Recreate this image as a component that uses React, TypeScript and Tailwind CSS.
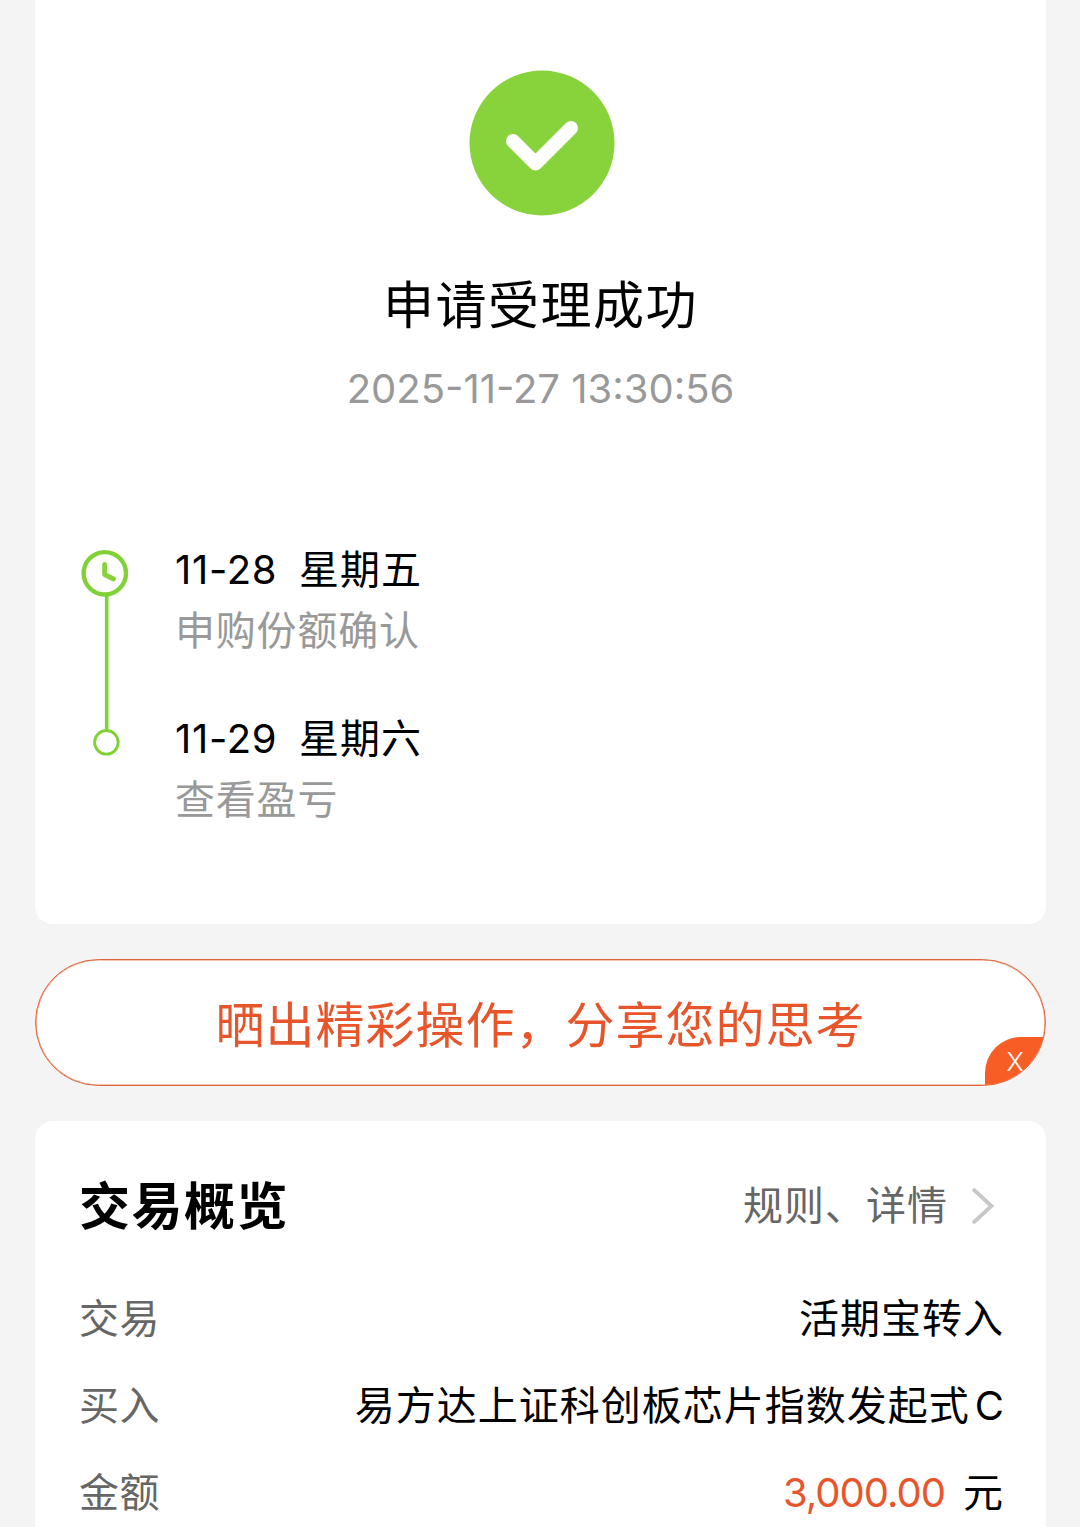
import type { ReactNode } from 'react';

const LATIN = "font-['Inter','Noto_Sans_CJK_SC',sans-serif]";

interface RowProps {
  label: string;
  children: ReactNode;
}

function SuccessIcon() {
  return (
    <svg className="ml-[2px] w-[146px] h-[146px]" viewBox="0 0 146 146" fill="none">
      <circle cx="73" cy="73" r="72.5" fill="#88d33c" />
      <path d="M44 71 L66.5 93.5 L102 58" stroke="#fff" strokeWidth="14" strokeLinecap="round" strokeLinejoin="round" />
    </svg>
  );
}

function Timeline() {
  return (
    <svg className="w-[52px] h-[212px] shrink-0" viewBox="0 0 52 212" fill="none">
      <path d="M26.7 48V182" stroke="#7fd13f" strokeWidth="3.6" />
      <circle cx="24.8" cy="26.3" r="21.2" stroke="#7fd136" strokeWidth="4.4" fill="#fff" />
      <path d="M24.6 17.5V27.5L33.5 32" stroke="#88d33c" strokeWidth="4.8" strokeLinecap="round" strokeLinejoin="round" />
      <circle cx="26.4" cy="195.3" r="11.8" stroke="#7fd136" strokeWidth="2.8" fill="#fff" />
    </svg>
  );
}

const STEPS = [
  { date: '11-28', day: '星期五', text: '申购份额确认' },
  { date: '11-29', day: '星期六', text: '查看盈亏' },
];

function Row({ label, children }: RowProps) {
  return (
    <div className="flex h-[87px] items-center justify-between leading-[60px]">
      <span className="-ml-px tracking-[0.5px] text-[#666]">{label}</span>
      <div className="flex items-center text-black">{children}</div>
    </div>
  );
}

export default function App() {
  return (
    <div className={`${LATIN} h-[1527px] w-[1080px] overflow-hidden bg-[#f4f4f4] pl-[35px] pr-[34px] text-[40px] tracking-[1px] text-black`}>
      {/* Result */}
      <section className="h-[924px] rounded-b-[18px] bg-white pt-[70px]">
        <div className="flex flex-col items-center">
          <SuccessIcon />
          <h1 className="mt-[55px] text-[51px] font-normal leading-[70px] tracking-[1.5px]">申请受理成功</h1>
          <p className="mt-[18px] text-[40px] leading-[60px] tracking-[0px] text-[#999]">2025-11-27 13:30:56</p>
        </div>

        <div className="mt-[128px] flex pl-[45px]">
          <Timeline />
          <div className="-mt-[7px] flex flex-col gap-[48px] pl-[43px]">
            {STEPS.map(step => (
              <div key={step.date} className="leading-[60px]">
                <p className="flex">
                  <span className="w-[124px] tracking-[0.7px]">{step.date}</span>
                  <span>{step.day}</span>
                </p>
                <p className="mt-px tracking-[0.8px] text-[#999]">{step.text}</p>
              </div>
            ))}
          </div>
        </div>
      </section>

      {/* Share banner */}
      <div className="relative mt-[35px] flex h-[127px] items-center justify-center overflow-hidden rounded-full border border-[#e0643a] bg-white shadow-[inset_0_0_0_0.6px_#ee8a66]">
        <span className="pt-[6px] text-[49px] tracking-[1px] text-[#e8552b]">晒出精彩操作，分享您的思考</span>
        <button className="absolute -bottom-px -right-px flex h-[49px] w-[61px] items-center justify-center rounded-tl-[36px] bg-[#f95d26] text-[26px] font-light text-white">
          X
        </button>
      </div>

      {/* Overview */}
      <section className="mt-[35px] h-[460px] rounded-t-[18px] bg-white pl-[45px] pr-[42px] pt-[49px]">
        <div className="flex h-[72px] items-center justify-between">
          <h2 className="-ml-px pt-[2px] text-[51px] font-bold tracking-[1.5px]">交易概览</h2>
          <div className="flex items-center text-[#666]">
            <span>规则、详情</span>
            <svg className="ml-[21px] mr-[7px] h-[40px] w-[28px]" viewBox="0 0 28 40" fill="none">
              <path d="M4 3L22.5 20L4 37" stroke="#c8c8c8" strokeWidth="3.8" />
            </svg>
          </div>
        </div>

        <div className="mt-[33px]">
          <Row label="交易">
            <span>活期宝转入</span>
          </Row>
          <Row label="买入">
            <span>易方达上证科创板芯片指数发起式</span>
            <span className="ml-[5px] -mr-px">C</span>
          </Row>
          <Row label="金额">
            <span className="tracking-[-1px] text-[#e8552b]">3,000.00</span>
            <span className="ml-[18px]">元</span>
          </Row>
        </div>
      </section>
    </div>
  );
}
